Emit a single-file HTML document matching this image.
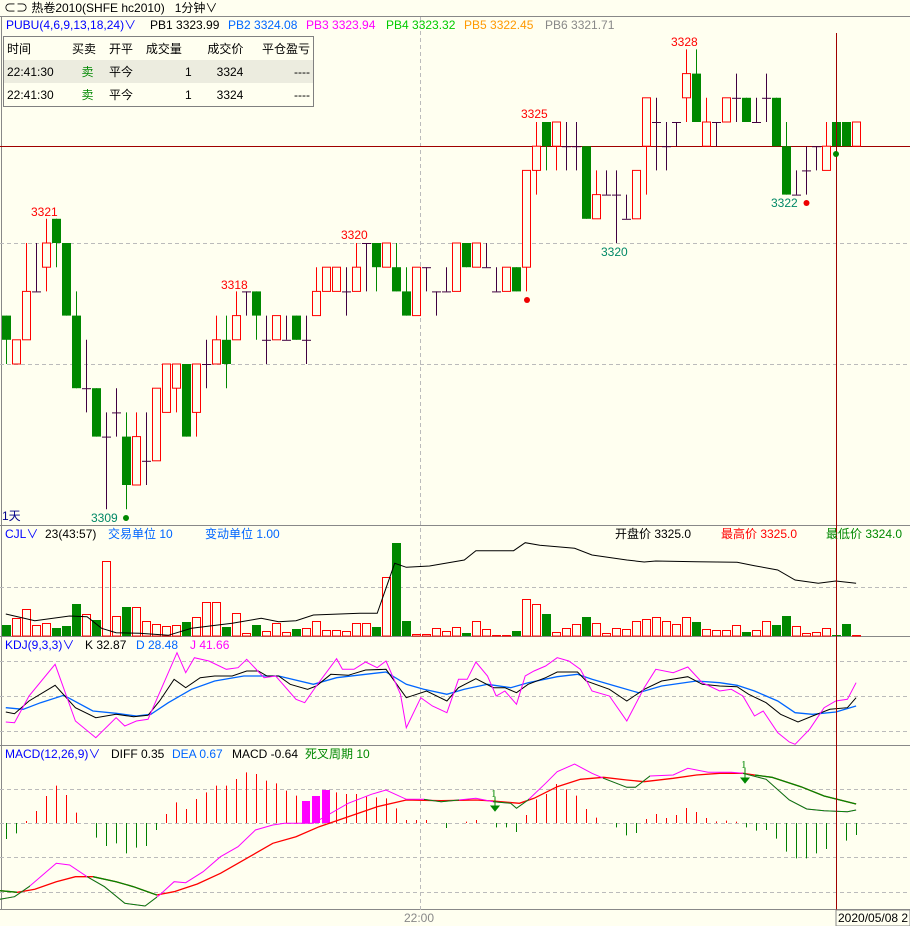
<!DOCTYPE html>
<html><head><meta charset="utf-8">
<style>
body{margin:0;background:#fffff0;width:910px;height:926px;overflow:hidden;position:relative;font-family:"Liberation Sans","Noto Sans CJK SC",sans-serif;font-size:12px;}
.t{position:absolute;white-space:pre;line-height:14px;}
svg{position:absolute;left:0;top:0;}
table{position:absolute;left:3px;top:36px;width:311px;border:1px solid #808080;border-collapse:collapse;font-size:12px;background:#fffff0;}
td{height:23px;padding:0 3px;white-space:nowrap;}
</style></head><body>
<svg id="s" width="910" height="926" xmlns="http://www.w3.org/2000/svg">
<g stroke="#888" stroke-width="1">
<line x1="0" y1="16.5" x2="910" y2="16.5"/>
<line x1="1.5" y1="16" x2="1.5" y2="910"/>
<line x1="0" y1="525.5" x2="910" y2="525.5"/>
<line x1="0" y1="636.5" x2="910" y2="636.5"/>
<line x1="0" y1="745.5" x2="910" y2="745.5"/>
<line x1="0" y1="909.5" x2="910" y2="909.5"/>
</g>
<g stroke="#bbb" stroke-width="1" stroke-dasharray="4,3">
<line x1="0" y1="243.5" x2="910" y2="243.5"/>
<line x1="0" y1="364.5" x2="910" y2="364.5"/>
<line x1="0" y1="587.5" x2="910" y2="587.5"/>
<line x1="0" y1="661.5" x2="910" y2="661.5"/>
<line x1="0" y1="696.5" x2="910" y2="696.5"/>
<line x1="0" y1="731.5" x2="910" y2="731.5"/>
<line x1="0" y1="789.5" x2="910" y2="789.5"/>
<line x1="0" y1="823.5" x2="910" y2="823.5"/>
<line x1="0" y1="857.5" x2="910" y2="857.5"/>
<line x1="0" y1="892.5" x2="910" y2="892.5"/>
<line x1="420.5" y1="17" x2="420.5" y2="910"/>
</g>
<line x1="0" y1="146.5" x2="910" y2="146.5" stroke="#a00000" stroke-width="1"/>
<g id="g"></g>
<line x1="836.5" y1="33" x2="836.5" y2="910" stroke="#a00000" stroke-width="1"/>
<circle cx="527" cy="300" r="3" fill="#e00"/>
<circle cx="806.5" cy="203" r="3" fill="#e00"/>
<circle cx="126" cy="518" r="3" fill="#080"/>
<circle cx="836" cy="154" r="3" fill="#080"/>
<g fill="#080" stroke="#080">
<line x1="495" y1="797" x2="495" y2="808"/><path d="M491 806 L495 811 L499 806Z"/>
<line x1="745" y1="768" x2="745" y2="780"/><path d="M741 778 L745 783 L749 778Z"/>
</g>
<rect x="836" y="910" width="74" height="16" fill="#fffff0" stroke="#888"/>
</svg>
<script>
var P=[[17,16,17,15],[15,16,16,15],[16,18,20,16],[18,18,20,18],[19,20,21,18],[21,20,21,19],[20,17,20,17],[17,14,18,14],[14,14,16,13],[14,12,14,12],[12,12,13,9],[13,13,14,12],[12,10,13,9],[10,12,13,10],[11,11,13,10],[11,14,14,11],[13,15,15,13],[14,15,15,13],[15,12,15,12],[13,15,15,12],[15,15,16,14],[15,16,17,15],[16,15,17,14],[16,17,18,16],[18,18,18,17],[18,17,18,16],[16,16,17,15],[16,17,17,16],[16,16,17,16],[17,16,17,16],[16,16,17,15],[17,18,19,17],[18,19,19,18],[18,19,19,18],[18,18,19,17],[18,19,20,18],[20,20,20,18],[20,19,20,18],[19,20,20,19],[19,18,20,18],[18,17,19,17],[17,19,19,17],[19,19,19,18],[18,18,18,17],[18,18,19,18],[18,20,20,18],[20,19,20,19],[19,20,20,19],[19,19,20,19],[18,18,19,18],[18,19,19,18],[19,18,19,18],[19,23,23,18],[23,24,25,22],[25,24,25,23],[24,25,25,23],[24,24,25,23],[24,24,25,23],[24,21,24,21],[21,22,23,21],[22,22,23,22],[22,22,23,20],[21,21,22,21],[21,23,23,21],[24,26,26,22],[25,25,26,23],[24,24,25,23],[25,25,25,24],[26,27,28,25],[27,25,28,25],[24,25,26,24],[25,25,25,24],[25,26,26,25],[26,26,27,25],[26,25,26,25],[25,25,26,25],[26,26,27,25],[26,24,26,24],[24,22,25,22],[22,22,23,22],[23,23,24,22],[24,24,24,23],[23,24,25,23],[25,24,25,24],[25,24,25,24],[24,25,25,24]];
var V=[625,618,609,625,623,628,626,604,614,620,561,616,607,607,621,624,626,625,622,617,602,602,627,613,633,625,631,623,632,629,628,621,630,630,631,623,623,627,577,543,621,634,634,628,631,627,633,621,629,635,635,631,599,604,614,632,628,624,617,623,633,628,629,621,619,617,621,624,617,622,629,630,630,625,632,630,621,625,616,626,633,632,628,635,624,635];
var M="g297 g280 r243 r213 r168 r137 r165 r218 r249 g293 g318 g310 g340 g323 g318 g270 r222 r187 r207 r177 r157 r137 r137 r117 r97 r102 r122 r130 r152 r167 m183 m168 m150 r157 r162 r162 r170 r172 r175 r205 r240 r240 r240 r249 g264 r248 r245 r240 r249 g262 g262 g276 r225 r178 r162 r132 r148 r167 r207 r233 r249 g262 g286 g279 r237 r222 r234 r225 r204 r216 r234 r244 r242 r245 g262 g272 g270 g296 g335 g355 g355 g340 g327 b315 g302 g285".split(" ");
function Y(p){return 243-(p-20)*24.2;}
var h='';
P.forEach(function(c,k){var o=c[0],cl=c[1],hi=c[2],lo=c[3],x=10*k;var w=x+6.5;
var up=cl>o,dn=cl<o;var col=dn?'#008800':(up?'#ff0000':'#400040');
if(hi!=lo)h+='<line x1="'+w+'" y1="'+Y(hi)+'" x2="'+w+'" y2="'+Y(lo)+'" stroke="'+col+'"/>';
if(up)h+='<rect x="'+(x+2.5)+'" y="'+Y(cl)+'" width="8" height="'+(Y(o)-Y(cl))+'" fill="#fffff0" stroke="#f00"/>';
else if(dn)h+='<rect x="'+(x+2)+'" y="'+Y(o)+'" width="9" height="'+(Y(cl)-Y(o))+'" fill="#008800"/>';
else h+='<line x1="'+(x+2)+'" y1="'+(Y(o)+0.5)+'" x2="'+(x+11)+'" y2="'+(Y(o)+0.5)+'" stroke="'+col+'"/>';
var t=V[k];if(dn)h+='<rect x="'+(x+2)+'" y="'+t+'" width="9" height="'+(636-t)+'" fill="#008800"/>';
else h+='<rect x="'+(x+2.5)+'" y="'+(t+0.5)+'" width="8" height="'+(635.5-t)+'" fill="none" stroke="#f00"/>';
var m=M[k],cc=m[0],zy=+m.slice(1),yy=740+zy/3,z=823;
var colm={g:'#008000',r:'#f00',m:'#f0f',b:'#06f'}[cc];
if(cc=='m')h+='<rect x="'+(x+2)+'" y="'+yy+'" width="8" height="'+(z-yy)+'" fill="#f0f"/>';
else if(Math.abs(yy-z)>1)h+='<line x1="'+w+'" y1="'+Math.min(yy,z)+'" x2="'+w+'" y2="'+Math.max(yy,z)+'" stroke="'+colm+'"/>';
});
function pl(a,oy,col,sw,clip){var s=[];for(var i=0;i<a.length;i+=2)s.push((a[i]/1.723).toFixed(1)+','+(oy+a[i+1]/3).toFixed(1));return '<polyline points="'+s.join(' ')+'" fill="none" stroke="'+col+'" stroke-width="'+(sw||1)+'"'+(clip?' clip-path="url(#'+clip+')"':'')+'/>';}
var CJ=[10,342,60,362,120,348,150,350,175,385,200,398,240,400,290,406,330,385,400,370,450,355,480,365,510,362,540,345,620,340,650,340,680,190,700,202,740,198,800,180,820,152,885,152,905,128,930,136,990,145,1020,165,1080,180,1110,186,1130,183,1200,185,1270,187,1300,197,1340,210,1370,240,1410,250,1440,243,1475,250];
var J=[10,258,25,260,50,180,95,85,130,255,165,305,200,245,215,270,235,255,255,250,275,170,305,50,320,110,335,65,360,75,390,100,410,95,425,70,455,125,475,120,510,190,525,200,545,150,580,68,590,100,610,100,630,78,650,95,665,75,690,175,700,275,725,185,745,210,770,230,790,130,805,130,820,78,840,120,855,180,870,165,890,205,905,120,920,105,940,90,960,65,980,75,1000,100,1020,165,1050,180,1080,255,1110,155,1130,100,1160,110,1185,93,1210,140,1240,165,1260,160,1280,180,1300,240,1315,225,1340,290,1360,318,1370,325,1395,280,1420,215,1440,195,1460,190,1475,140];
var K=[10,228,25,233,50,195,95,148,130,215,165,245,200,235,230,242,255,238,275,195,300,130,320,155,345,125,370,120,400,120,425,105,445,105,460,120,480,120,500,145,530,160,545,150,570,115,600,118,630,102,665,100,700,185,735,165,770,195,790,155,820,128,850,155,870,155,890,170,910,145,940,125,960,108,995,108,1010,135,1050,160,1080,195,1110,160,1140,135,1185,122,1210,145,1240,150,1270,152,1290,175,1320,200,1345,235,1375,258,1400,240,1430,220,1460,215,1475,185];
var D=[10,215,40,220,70,200,110,178,160,225,200,232,235,240,260,235,290,200,330,160,370,135,420,120,480,120,540,145,580,125,630,115,665,108,700,145,730,160,770,175,800,160,840,145,880,155,910,140,960,122,995,115,1020,130,1060,150,1100,170,1140,150,1200,135,1240,140,1270,148,1300,165,1340,195,1370,230,1400,235,1440,228,1475,210];
var DI=[0,478,25,470,50,440,97,370,120,375,150,410,180,440,215,490,250,498,275,465,300,425,320,428,350,395,380,350,410,320,440,270,470,255,490,250,540,250,600,190,640,163,665,150,700,178,730,178,760,185,790,180,820,175,850,185,880,190,890,205,910,180,940,130,960,95,990,72,1020,100,1040,115,1080,142,1095,142,1120,108,1160,105,1185,85,1220,97,1260,97,1280,100,1320,118,1360,180,1390,207,1420,212,1460,215,1475,210];
var DE=[0,452,30,457,60,448,97,425,130,410,160,410,200,425,230,440,270,465,300,455,340,432,380,400,430,350,470,310,510,290,550,260,600,230,650,200,700,180,760,182,820,180,850,183,895,190,920,175,960,140,1000,118,1040,112,1080,120,1110,125,1160,115,1200,105,1240,100,1280,100,1300,105,1330,112,1380,140,1420,168,1475,192];
h+='<defs><clipPath id="c1"><rect x="0" y="740" width="30" height="170"/><rect x="87" y="740" width="70" height="170"/><rect x="424" y="740" width="35" height="170"/><rect x="493" y="740" width="36" height="170"/><rect x="603" y="740" width="47" height="170"/><rect x="743" y="740" width="170" height="170"/></clipPath><clipPath id="c2"><rect x="0" y="740" width="17" height="170"/><rect x="93" y="740" width="64" height="170"/><rect x="755" y="740" width="160" height="170"/></clipPath></defs>';
h+=pl(CJ,500,'#000');
h+=pl(D,636,'#06f',1.3)+pl(K,636,'#000')+pl(J,636,'#f0f');
h+=pl(DE,740,'#f00',1.3)+pl(DE,740,'#080',1.3,'c2')+pl(DI,740,'#f0f')+pl(DI,740,'#080',1,'c1');
document.getElementById('g').innerHTML=h;
</script>
<div class="t" style="left:4px;top:1px;color:#000">⊂⊃ 热卷2010(SHFE hc2010)   1分钟∨</div>
<div class="t" style="left:6px;top:18px;color:#00f">PUBU(4,6,9,13,18,24)∨</div>
<div class="t" style="left:150px;top:18px;color:#000">PB1 3323.99</div>
<div class="t" style="left:228px;top:18px;color:#06f">PB2 3324.08</div>
<div class="t" style="left:306px;top:18px;color:#f0f">PB3 3323.94</div>
<div class="t" style="left:386px;top:18px;color:#0c0">PB4 3323.32</div>
<div class="t" style="left:464px;top:18px;color:#f90">PB5 3322.45</div>
<div class="t" style="left:545px;top:18px;color:#888">PB6 3321.71</div>
<table>
<tr><td>时间</td><td>买卖</td><td>开平</td><td>成交量</td><td style="text-align:right">成交价</td><td style="text-align:right">平仓盈亏</td></tr>
<tr style="background:#ececdf"><td>22:41:30</td><td style="color:#080;text-align:center">卖</td><td>平今</td><td style="text-align:right">1</td><td style="text-align:right">3324</td><td style="text-align:right">----</td></tr>
<tr><td>22:41:30</td><td style="color:#080;text-align:center">卖</td><td>平今</td><td style="text-align:right">1</td><td style="text-align:right">3324</td><td style="text-align:right">----</td></tr>
</table>
<div class="t" style="left:31px;top:205px;color:#f00">3321</div>
<div class="t" style="left:221px;top:278px;color:#f00">3318</div>
<div class="t" style="left:341px;top:228px;color:#f00">3320</div>
<div class="t" style="left:521px;top:107px;color:#f00">3325</div>
<div class="t" style="left:671px;top:35px;color:#f00">3328</div>
<div class="t" style="left:771px;top:196px;color:#086">3322</div>
<div class="t" style="left:601px;top:245px;color:#086">3320</div>
<div class="t" style="left:91px;top:511px;color:#086">3309</div>
<div class="t" style="left:2px;top:509px;color:#008">1天</div>
<div class="t" style="left:5px;top:527px;color:#00f">CJL∨</div>
<div class="t" style="left:45px;top:527px;color:#000">23(43:57)</div>
<div class="t" style="left:108px;top:527px;color:#06f">交易单位 10</div>
<div class="t" style="left:205px;top:527px;color:#06f">变动单位 1.00</div>
<div class="t" style="left:615px;top:527px;color:#000">开盘价 3325.0</div>
<div class="t" style="left:721px;top:527px;color:#f00">最高价 3325.0</div>
<div class="t" style="left:826px;top:527px;color:#080">最低价 3324.0</div>
<div class="t" style="left:5px;top:638px;color:#00f">KDJ(9,3,3)∨</div>
<div class="t" style="left:85px;top:638px;color:#000">K 32.87</div>
<div class="t" style="left:136px;top:638px;color:#06f">D 28.48</div>
<div class="t" style="left:190px;top:638px;color:#f0f">J 41.66</div>
<div class="t" style="left:5px;top:747px;color:#00f">MACD(12,26,9)∨</div>
<div class="t" style="left:111px;top:747px;color:#000">DIFF 0.35</div>
<div class="t" style="left:172px;top:747px;color:#06f">DEA 0.67</div>
<div class="t" style="left:232px;top:747px;color:#000">MACD -0.64</div>
<div class="t" style="left:305px;top:747px;color:#080">死叉周期 10</div>
<div class="t" style="left:491px;top:787px;color:#080;font-size:11px;font-family:'Liberation Serif',serif">1</div>
<div class="t" style="left:741px;top:758px;color:#080;font-size:11px;font-family:'Liberation Serif',serif">1</div>
<div class="t" style="left:404px;top:911px;color:#888">22:00</div>
<div class="t" style="left:838px;top:911px;color:#000">2020/05/08 2</div>
</body></html>
